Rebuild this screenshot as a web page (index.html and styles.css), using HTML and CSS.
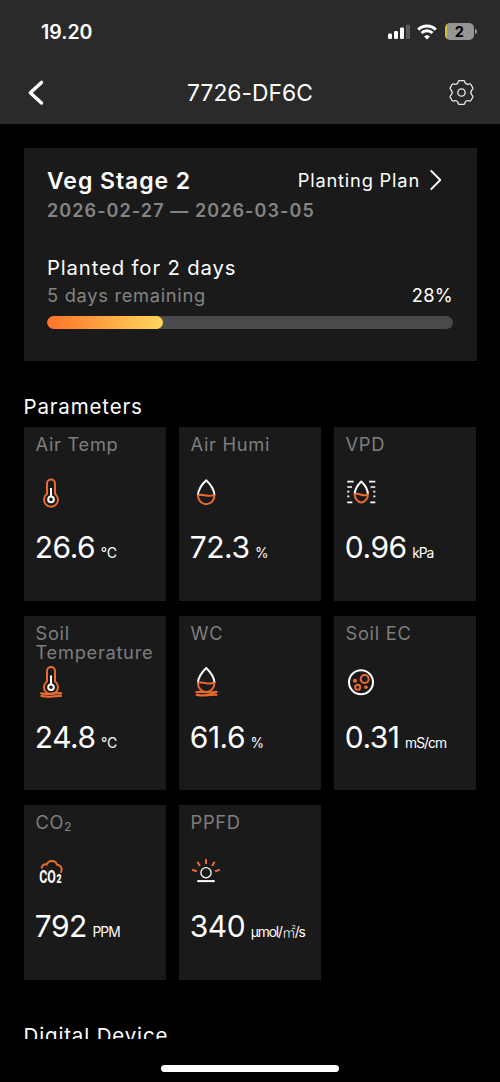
FILE: index.html
```html
<!DOCTYPE html>
<html lang="en">
<head>
<meta charset="utf-8">
<meta name="viewport" content="width=device-width, initial-scale=1">
<title>7726-DF6C</title>
<link rel="stylesheet" href="styles.css">
</head>
<body>
<div class="screen">
  <header class="header">
    <div class="status">
      <span class="clock">19.20</span>
      <div class="indicators">
        <svg class="signal" width="23" height="17" viewBox="0 0 23 17"><rect x="0" y="10.5" width="4" height="5.5" rx="1.2"/><rect x="6" y="8" width="4" height="8" rx="1.2"/><rect x="12" y="4.6" width="4" height="11.4" rx="1.2"/><rect class="off" x="18" y="1.5" width="4" height="14.5" rx="1.2"/></svg>
        <svg class="wifi" width="20" height="16" viewBox="0 0 20 16"><path d="M1.2 5.6a12.7 12.7 0 0 1 17.6 0"/><path d="M4.5 9a8 8 0 0 1 11 0"/><path class="dot" d="M10 15.6l-2.9-3a4.2 4.2 0 0 1 5.8 0z"/></svg>
        <div class="battery"><span class="battery-body">2</span><span class="battery-tip"></span></div>
      </div>
    </div>
    <nav class="nav">
      <svg class="back" width="16" height="26" viewBox="0 0 16 26"><path d="M13.5 2.4 2.3 12.7l11.2 10.3"/></svg>
      <h1 class="title">7726-DF6C</h1>
      <svg class="gear" width="26" height="26" viewBox="-13.5 -12.5 26 26"><path d="M-2.2-11.8H2.2Q3-11.8 3.2-11L3.7-9.6Q4.7-7.9 6.5-8.2L8.1-8.6Q9-8.7 9.4-8L11.3-4.6Q11.6-3.9 11.1-3.3L10.1-2.1Q8.5 0 10.1 2.1L11.1 3.3Q11.6 3.9 11.3 4.6L9.4 8Q9 8.7 8.1 8.6L6.5 8.2Q4.7 7.9 3.7 9.6L3.2 11Q3 11.8 2.2 11.8H-2.2Q-3 11.8-3.2 11L-3.7 9.6Q-4.7 7.9-6.5 8.2L-8.1 8.6Q-9 8.7-9.4 8L-11.3 4.6Q-11.6 3.9-11.1 3.3L-10.1 2.1Q-8.5 0-10.1-2.1L-11.1-3.3Q-11.6-3.9-11.3-4.6L-9.4-8Q-9-8.7-8.1-8.6L-6.5-8.2Q-4.7-7.9-3.7-9.6L-3.2-11Q-3-11.8-2.2-11.8Z"/><circle r="3.7"/></svg>
    </nav>
  </header>

  <main class="content">
    <section class="stage">
      <div class="stage-top">
        <h2 class="stage-name">Veg Stage 2</h2>
        <a class="plan"><span>Planting Plan</span><svg width="12" height="20" viewBox="0 0 12 20"><path d="M1.3 1 10.3 10l-9 9"/></svg></a>
      </div>
      <p class="dates">2026-02-27 — 2026-03-05</p>
      <p class="planted">Planted for 2 days</p>
      <div class="remaining"><span class="remaining-text">5 days remaining</span><span class="percent">28%</span></div>
      <div class="bar"><div class="bar-fill" style="width:28.5%"></div></div>
    </section>

    <h3 class="section-title">Parameters</h3>
    <div class="grid">
      <article class="cell">
        <div class="label">Air Temp</div>
        <svg class="icon" viewBox="0 0 30 30"><path class="o" d="M11 15.9V5.6a4 4 0 0 1 8 0V15.9a7 7 0 1 1-8 0z"/><path class="w" d="M15 10v8.4"/><circle class="w" cx="15" cy="21.4" r="2.8"/></svg>
        <div class="reading"><span class="value">26.6</span><span class="unit">℃</span></div>
      </article>
      <article class="cell">
        <div class="label">Air Humi</div>
        <svg class="icon" viewBox="0 0 30 30"><path class="w" d="M6.9 17.3C7.1 12 11.7 5.6 15.2 2.2 18.8 5.6 23.3 12 23.5 17.3"/><path class="o" d="M6.9 17.3a8.3 9 0 0 0 16.6 0c-2.6.4-5.3.9-8.3.2S9.5 16.1 6.9 17.3z"/></svg>
        <div class="reading"><span class="value">72.3</span><span class="unit">%</span></div>
      </article>
      <article class="cell">
        <div class="label">VPD</div>
        <svg class="icon" viewBox="0 0 30 30"><path class="w" d="M8.7 16.2C8.9 11.6 12.4 6.2 15.3 3.5 18.2 6.2 21.7 11.6 21.9 16.2"/><path class="o" d="M8.7 16.2a6.6 8.2 0 0 0 13.2 0c-2 1.4-4.4 1.2-6.6.5S10.7 15.4 8.7 16.2z"/><path class="dash" d="M1.3 3.7h6.3M1.3 9h4.7M1.3 13.7h2M1.3 18.3h2M1.3 24.3h5M29.3 3.7H23M29.3 9h-4.7M29.3 13.7h-2M29.3 18.3h-2M29.3 24.3h-5"/></svg>
        <div class="reading"><span class="value">0.96</span><span class="unit">kPa</span></div>
      </article>
      <article class="cell">
        <div class="label">Soil Temperature</div>
        <svg class="icon" viewBox="0 0 30 30"><path class="o" d="M11 14.5V4a4 4 0 0 1 8 0v10.5a7 7 0 1 1-8 0z"/><path class="w" d="M15 8.5v8.9"/><circle class="w" cx="15" cy="20.3" r="2.8"/><path class="o ground" d="M5.2 26.4q5 1.2 10 .3t10-.3M5.4 29q6 1.2 11 .5t8.6-.5"/></svg>
        <div class="reading"><span class="value">24.8</span><span class="unit">℃</span></div>
      </article>
      <article class="cell">
        <div class="label">WC</div>
        <svg class="icon" viewBox="0 0 30 30"><path class="w" d="M6.9 16C7.1 10.5 11.7 4.4 15.2 1 18.8 4.4 23.3 10.5 23.5 16"/><path class="o" d="M6.9 16a8.3 9 0 0 0 16.6 0c-2.6.4-5.3.9-8.3.2S9.5 14.8 6.9 16z"/><path class="o ground" d="M5.5 25.2q5-.7 10 0t10-.3M5.7 27.8q6 .9 11 .3t8.6-.3"/></svg>
        <div class="reading"><span class="value">61.6</span><span class="unit">%</span></div>
      </article>
      <article class="cell">
        <div class="label">Soil EC</div>
        <svg class="icon" viewBox="0 0 30 30"><circle class="w" cx="15" cy="15.3" r="12"/><circle class="o" cx="18.7" cy="12" r="4"/><circle class="o" cx="11.7" cy="20.3" r="2.5"/><circle class="of" cx="9" cy="13.7" r="2"/><circle class="of" cx="20" cy="20.3" r="1.8"/></svg>
        <div class="reading"><span class="value">0.31</span><span class="unit">mS/cm</span></div>
      </article>
      <article class="cell">
        <div class="label">CO<span class="sub">2</span></div>
        <svg class="icon" viewBox="0 0 30 30"><path class="o" d="M5.8 11.8c.2-2.9 2.6-4.1 4.8-3.2 1.6-4.7 9-5.2 10.5.2 3.2.2 5.9 3.2 4 7.2"/><text class="co" transform="translate(3.2 27) scale(.69 1)">CO<tspan class="co2" dx="0.8">2</tspan></text></svg>
        <div class="reading"><span class="value">792</span><span class="unit">PPM</span></div>
      </article>
      <article class="cell">
        <div class="label">PPFD</div>
        <svg class="icon" viewBox="0 0 30 30"><circle class="w thin" cx="15" cy="16.7" r="5.1"/><path class="w" d="M6.3 25.1h17.4"/><path class="o ray" d="M15 3v5M6.5 5.7l2.4 4.3M23.5 5.7l-2.4 4.3M1.2 13.7l4.7 1.6M28.8 13.7l-4.7 1.6"/></svg>
        <div class="reading"><span class="value">340</span><span class="unit micro">μmol/<span class="sqm">㎡</span>/s</span></div>
      </article>
    </div>

    <h3 class="section-title devices">Digital Device</h3>
  </main>
  <footer class="home"><span class="home-bar"></span></footer>
</div>
</body>
</html>
```
FILE: styles.css
```css
* { box-sizing: border-box; }
html, body { margin: 0; background: #000; }
body { font-family: Inter, "Noto Sans CJK SC", sans-serif; color: #fff; }
h1, h2, h3, p { margin: 0; font-weight: 400; }
svg { display: block; flex: none; overflow: visible; }
.screen { display: flex; flex-direction: column; width: 500px; height: 1082px; overflow: hidden; background: #000; }

.header { height: 124px; background: #2a2a2a; flex: none; }
.status { display: flex; align-items: center; justify-content: space-between; height: 63px; padding: 0 23px 0 41px; }
.clock { font-size: 19.5px; font-weight: 600; letter-spacing: 0; }
.indicators { display: flex; align-items: center; }
.signal { fill: #fff; margin-right: 6.5px; }
.signal .off { fill: #5a5a5a; }
.wifi { fill: none; stroke: #fff; stroke-width: 3; margin-right: 7.5px; }
.wifi .dot { fill: #fff; stroke: none; }
.battery { display: flex; align-items: center; gap: 1px; }
.battery-body { width: 29.5px; height: 17px; border-radius: 5px; background: linear-gradient(90deg, #d9bd3c 2px, #959595 2px); color: #000; font-size: 14.5px; line-height: 17px; font-weight: 700; text-align: center; }
.battery-tip { width: 2px; height: 5px; border-radius: 0 2px 2px 0; background: #959595; }

.nav { display: grid; grid-template-columns: 26px 1fr 26px; align-items: center; height: 60px; padding: 0 27px; }
.back { fill: none; stroke: #fff; stroke-width: 3.4; stroke-linecap: round; stroke-linejoin: round; margin-left: 1px; }
.title { font-size: 22.8px; line-height: 30px; letter-spacing: 0.05px; text-align: center; }
.gear { fill: none; stroke: #e8e8e8; stroke-width: 1.3; margin-left: 1px; }

.content { height: 914.5px; padding: 24px 23.5px 0; overflow: hidden; flex: none; }
.stage { height: 212.5px; padding: 18px 23.5px 0; background: #1a1a1a; }
.stage-top { display: flex; justify-content: space-between; align-items: center; height: 30px; }
.stage-name { font-size: 23px; line-height: 30px; font-weight: 600; letter-spacing: 0.95px; }
.plan { display: flex; align-items: center; gap: 10px; padding-right: 11px; padding-bottom: 2px; font-size: 18.3px; letter-spacing: 0.8px; }
.plan svg { fill: none; stroke: #fff; stroke-width: 1.8; stroke-linecap: round; stroke-linejoin: round; }
.dates { font-size: 18px; line-height: 30px; font-weight: 600; letter-spacing: 1.08px; color: #848484; }
.planted { margin-top: 29px; font-size: 20.3px; line-height: 26px; letter-spacing: 0.87px; }
.remaining { display: flex; justify-content: space-between; font-size: 18.3px; line-height: 29px; }
.remaining-text { color: #848484; letter-spacing: 0.7px; }
.percent { letter-spacing: 0.3px; }
.bar { margin-top: 6px; height: 13px; border-radius: 7px; background: #4a4a4a; overflow: hidden; }
.bar-fill { height: 100%; border-radius: 7px; background: linear-gradient(90deg, #ff7329, #ffd75a); }

.section-title { margin-top: 26px; font-size: 20.5px; line-height: 40px; font-weight: 400; letter-spacing: 0.85px; }
.grid { display: grid; grid-template-columns: repeat(3, 142.5px); gap: 14.5px 12.5px; }
.cell { height: 174.7px; padding: 8.1px 12px 0; background: #1a1a1a; }
.label { height: 43.3px; font-size: 18.3px; line-height: 19.3px; letter-spacing: 0.7px; color: #7e7e7e; }
.sub { font-size: 11.5px; position: relative; top: 2px; font-weight: 500; }
.icon { width: 30px; height: 30px; }
.icon .w { fill: none; stroke: #fff; stroke-width: 2; stroke-linejoin: round; }
.icon .thin { stroke-width: 1.3; }
.icon .o { fill: none; stroke: #ec6a30; stroke-width: 2; stroke-linejoin: round; stroke-linecap: round; }
.icon .ground { stroke-width: 2.2; }
.icon .ray { stroke-linecap: butt; }
.icon .of { fill: #ec6a30; }
.icon .dash { stroke: #fff; stroke-width: 1.7; }
.icon .co { font-family: Roboto, sans-serif; font-weight: 700; font-size: 18px; fill: #fff; }
.icon .co2 { font-size: 12.5px; font-weight: 900; }
.reading { display: flex; align-items: baseline; gap: 5.5px; margin-top: 21.6px; line-height: 36px; white-space: nowrap; }
.value { font-size: 30px; font-weight: 400; letter-spacing: -0.5px; margin-left: -0.7px; }
.unit { font-size: 13.8px; line-height: 16px; letter-spacing: -0.95px; }
.micro { letter-spacing: -1.1px; }
.sqm { font-family: "Noto Sans CJK SC", sans-serif; font-weight: 300; }
.devices { margin-top: 36px; white-space: nowrap; }

.home { display: flex; justify-content: center; padding-top: 26.5px; flex: none; }
.home-bar { width: 178.5px; height: 7px; border-radius: 4px; background: #fff; }
```
